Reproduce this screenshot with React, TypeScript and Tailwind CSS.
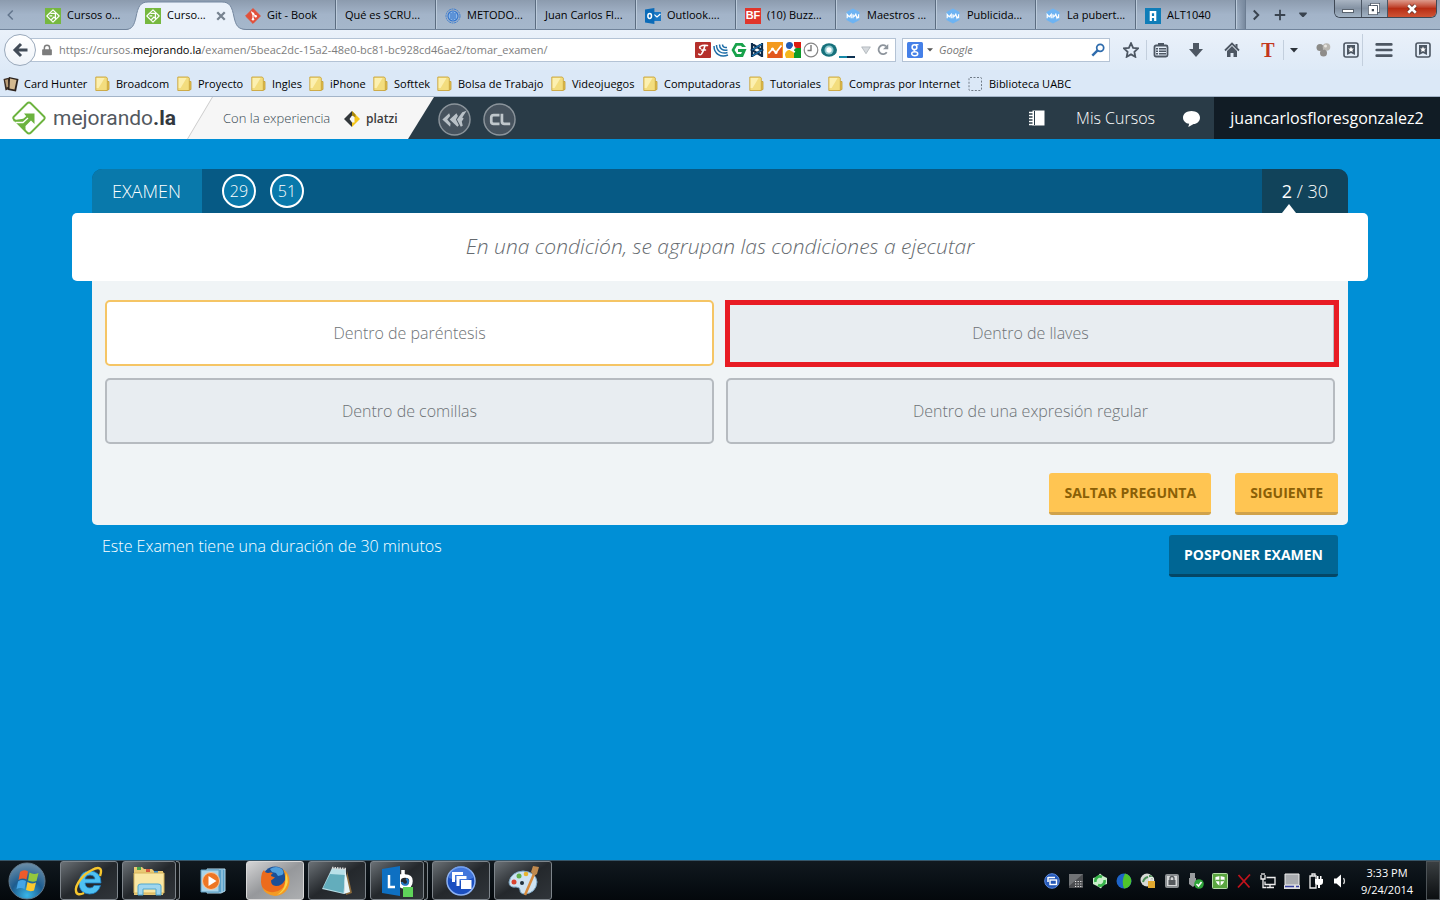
import React, { useState } from "react";

type IconProps = { className?: string };

function Svg({ children, className = "size-4", box = "0 0 16 16" }: { children: React.ReactNode; className?: string; box?: string }) {
  return (
    <svg viewBox={box} className={`${className} shrink-0`} aria-hidden="true" fill="none">
      {children}
    </svg>
  );
}

/* ---------- Favicons ---------- */

const MejorandoFavicon = () => (
  <Svg>
    <rect width="16" height="16" fill="#76b83f" />
    <path d="M8 1.8 14.2 8 8 14.2 1.800 8Z" stroke="#fff" strokeWidth="1.1" strokeLinejoin="round" />
    <path d="M5.4 5.400h5v5L8.900 9.100l-2.600 2.600M4.500 7.800h2.800" stroke="#fff" strokeWidth="1.3" />
  </Svg>
);

const GitFavicon = () => (
  <Svg>
    <path d="M8 .6 15.400 8 8 15.400.6 8Z" fill="#e2503a" stroke="#e2503a" strokeLinejoin="round" />
    <path d="M6.2 3.600 8 5.400v5.800M8 5.600l2.600 2.600" stroke="#fff" strokeWidth="1.1" />
    <circle cx="8" cy="5.600" r="1.200" fill="#fff" />
    <circle cx="8" cy="11.200" r="1.200" fill="#fff" />
    <circle cx="10.700" cy="8.300" r="1.200" fill="#fff" />
  </Svg>
);

const RingFavicon = () => (
  <Svg>
    <circle cx="8" cy="8" r="7" stroke="#3f7fd0" strokeWidth="1" strokeDasharray="2 .6" />
    <circle cx="8" cy="8" r="5" fill="#8db9ea" stroke="#3474cc" strokeWidth="1.200" />
    <path d="M6 5v6M8 4v8M10 5v6" stroke="#2d6cc4" strokeWidth="1" />
  </Svg>
);

const OutlookFavicon = () => (
  <Svg>
    <path d="M8 4h8v9H8Z" fill="#1b78c4" />
    <path d="M9 6.500 12 9l3.400-3" stroke="#fff" strokeWidth="1.300" />
    <path d="M0 1.600 9.400 0v16L0 14.400Z" fill="#0b6bb8" />
    <ellipse cx="4.700" cy="8" rx="1.800" ry="2.400" stroke="#fff" strokeWidth="1.500" />
  </Svg>
);

const BuzzFavicon = () => (
  <span className="flex size-4 shrink-0 items-center justify-center bg-[#e0352b] font-['Liberation_Sans'] text-[11px] leading-none font-bold text-white">BF</span>
);

const HexFavicon = () => (
  <Svg>
    <path d="M8 .5 14.500 4v8L8 15.500 1.500 12V4Z" fill="#6db3f2" />
    <path d="M2.200 10.200V6.400l2 2.400 2-2.400v3.800M8 6.200v4M13.600 6.200v4M8 8.200h1.600l1.200-2 1.200 4 1.600-2" stroke="#fff" strokeWidth="1.200" />
  </Svg>
);

const AltFavicon = () => (
  <Svg>
    <rect width="16" height="16" fill="#0f7db8" />
    <path d="M5.800 13V4.200h4.400V13M5.800 9h4.400" stroke="#fff" strokeWidth="2.200" />
  </Svg>
);

/* ---------- Tab strip ---------- */

const tabs: { label: string; icon?: () => React.ReactElement; active?: boolean }[] = [
  { label: "Cursos o...", icon: MejorandoFavicon },
  { label: "Curso...", icon: MejorandoFavicon, active: true },
  { label: "Git - Book", icon: GitFavicon },
  { label: "Qué es SCRU..." },
  { label: "METODO...", icon: RingFavicon },
  { label: "Juan Carlos Fl..." },
  { label: "Outlook....", icon: OutlookFavicon },
  { label: "(10) Buzz...", icon: BuzzFavicon },
  { label: "Maestros ...", icon: HexFavicon },
  { label: "Publicida...", icon: HexFavicon },
  { label: "La pubert...", icon: HexFavicon },
  { label: "ALT1040", icon: AltFavicon },
];

function TabStrip() {
  return (
    <div className="flex h-[30px] border-b border-[#71849b] bg-linear-to-b from-[#8c9bae] via-[#a3b4c9] to-[#a5b7cb]">
      <button aria-label="Pestañas anteriores" className="flex w-9 shrink-0 items-center pl-1.5 text-[#62758c]">
        <Svg className="size-3">
          <path d="M9 2 3 8l6 6" stroke="currentColor" strokeWidth="2" />
        </Svg>
      </button>
      <div role="tablist" className="flex min-w-0">
        {tabs.map((tab, i) => (
          <div key={i} className={`relative flex w-[100px] min-w-0 ${i > 1 ? "border-r border-[#5b6c80] shadow-[1px_0_0_#bccbdb]" : ""}`}>
            {tab.active && (
              <svg viewBox="0 0 120 30" preserveAspectRatio="none" className="absolute top-0 -left-2.5 h-[30px] w-[120px]" aria-hidden="true">
                <path d="M0 30C6 29 8 26 10 17 12 7 14 2 22 2H96C104 2 106 7 108 17 110 26 112 29 120 30Z" fill="#eaf1fa" />
                <path d="M0 29.500C6 29 8 26 10 17 12 7 14 2 22 2H96C104 2 106 7 108 17 110 26 112 29 120 29.500" fill="none" stroke="#7588a0" />
              </svg>
            )}
            <button
              role="tab"
              aria-selected={!!tab.active}
              className="relative flex min-w-0 flex-1 items-center gap-1.5 overflow-hidden pt-0.5 pl-[9px] text-[11px] whitespace-nowrap text-black"
            >
              {tab.icon && <tab.icon />}
              <span>{tab.label}</span>
            </button>
            {tab.active && (
              <button aria-label="Cerrar pestaña" className="relative mr-2.5 flex shrink-0 items-center pt-0.5 text-[#76828f]">
                <Svg className="size-2.5">
                  <path d="m2 2 12 12M14 2 2 14" stroke="currentColor" strokeWidth="3.600" />
                </Svg>
              </button>
            )}
          </div>
        ))}
      </div>
      <div className="w-2.5 border-r border-[#6c7d92] bg-linear-to-r from-transparent to-[#77889d]" />
      <div className="flex items-center gap-3 pl-1 text-[#39434f]">
        <button aria-label="Pestañas siguientes">
          <Svg className="size-3">
            <path d="m5 2 6 6-6 6" stroke="currentColor" strokeWidth="2.600" />
          </Svg>
        </button>
        <button aria-label="Nueva pestaña">
          <Svg className="size-3">
            <path d="M8 1v14M1 8h14" stroke="currentColor" strokeWidth="2.400" />
          </Svg>
        </button>
        <button aria-label="Lista de pestañas">
          <Svg className="size-2.5">
            <path d="M2 4h12v2l-5 5H7L2 6Z" fill="currentColor" />
          </Svg>
        </button>
      </div>
      <div className="mr-[3px] ml-auto flex h-[18px] w-[103px] shrink-0 overflow-hidden rounded-b-md border border-t-0 border-[#3f4855]">
        <button aria-label="Minimizar" className="flex flex-1 items-end justify-center border-r border-[#4b5664] bg-linear-to-b from-[#aab5c3] via-[#8492a3] to-[#a3b4c6] pb-1">
          <span className="h-1 w-3 border border-[#59636f] bg-white" />
        </button>
        <button aria-label="Restaurar" className="flex flex-1 items-center justify-center border-r border-[#4b5664] bg-linear-to-b from-[#aab5c3] via-[#8492a3] to-[#a3b4c6]">
          <Svg className="size-3">
            <path d="M5 5V2h9v9h-3" stroke="#4b5664" strokeWidth="4" />
            <path d="M5 5V2h9v9h-3" stroke="#fff" strokeWidth="2" />
            <rect x="2" y="5" width="9" height="9" stroke="#4b5664" strokeWidth="4" />
            <rect x="2" y="5" width="9" height="9" fill="#fff" stroke="#fff" strokeWidth="2" />
            <rect x="5" y="8" width="3" height="3" fill="#3c4652" />
          </Svg>
        </button>
        <button aria-label="Cerrar" className="flex w-12 items-center justify-center bg-linear-to-b from-[#dd9a8c] via-[#b82d14] to-[#cf5334]">
          <Svg className="size-3">
            <path d="m3 3 10 10M13 3 3 13" stroke="#5b2a22" strokeWidth="5.500" />
            <path d="m3 3 10 10M13 3 3 13" stroke="#fff" strokeWidth="3.600" />
          </Svg>
        </button>
      </div>
    </div>
  );
}

/* ---------- Navigation bar ---------- */

function AddonIcons() {
  return (
    <div className="flex shrink-0 items-center gap-0.5">
      <Svg>
        <rect width="16" height="16" rx="1" fill="#b5302b" />
        <path d="M5 4.500q3-2 7.500-1M10 3.500q-1.500 6-3.500 8.500-1.500 1.500-2.800 0M6.500 8h4M5 4.500q-1 1.500.5 2" stroke="#fff" strokeWidth="1.500" strokeLinecap="round" />
      </Svg>
      <Svg>
        <path d="M1 4c0 8 7 12 14 9M3.500 3c0 6 5 9.500 11 7.500M6.500 2.500c0 4 3 6.500 8 5.500M9.500 2.500c0 2 1.500 3.500 4.500 3" stroke="#1e6ea8" strokeWidth="1.500" />
      </Svg>
      <Svg>
        <path d="M4.500 1h7L15 5h-4L10 3.800H6L3.500 8 6 12h4l1-2H7V7h8.500L12 15H4.500L.5 8Z" fill="#18a24b" />
      </Svg>
      <Svg>
        <path d="M3 1v14M13 1v14M3 2l10 6L3 14M13 2 3 8l10 6" stroke="#0d2c4c" strokeWidth="2.200" />
        <path d="M3 8 13 2M3 14l10-6" stroke="#1d78b8" strokeWidth="1.200" />
      </Svg>
      <Svg>
        <rect width="16" height="16" fill="#f39a1e" />
        <path d="m1 12 4-5 4 3 6-7v13H1Z" fill="#e2571e" />
        <path d="m1.500 11.500 4-4.500 3.500 3.500 5.500-7" stroke="#fff" strokeWidth="1.800" />
        <circle cx="5.500" cy="7" r="1.500" fill="#fff" />
        <circle cx="9" cy="10.500" r="1.500" fill="#fff" />
      </Svg>
      <Svg>
        <rect width="16" height="16" fill="#fff" />
        <path d="M9 0h7v6h-4a3 3 0 0 1-3-3Z" fill="#dc1c12" />
        <path d="M9 8a3 3 0 0 1 3-2h4v10H9Z" fill="#0b9a28" />
        <circle cx="4.500" cy="3.500" r="3.500" fill="#2059b3" />
        <path d="M0 13c0-3 2-5 5-5s4 2 4 4v4H1Z" fill="#f4b71c" />
        <path d="M9 4 6 8l4 2" stroke="#fff" strokeWidth="1.500" />
      </Svg>
      <Svg>
        <circle cx="8" cy="8" r="6.800" fill="#fff" stroke="#858585" strokeWidth="1.200" />
        <path d="M8 3v5.500H4.500" stroke="#777" strokeWidth="1.400" />
      </Svg>
      <Svg>
        <ellipse cx="8" cy="8" rx="8" ry="6.800" fill="#16717c" />
        <circle cx="8" cy="8" r="4.500" fill="#8cc7cd" />
        <circle cx="8" cy="8" r="2.700" fill="#fff" />
      </Svg>
      <Svg>
        <path d="M0 14h8v2H0Z" fill="#1789a8" />
        <path d="M8 14h8v2H8Z" fill="#0c3152" />
      </Svg>
    </div>
  );
}

const BookmarkBox = () => (
  <Svg>
    <rect x="1" y="1" width="14" height="14" rx="2" stroke="#4d5763" strokeWidth="1.600" />
    <path d="M4 3h8v10l-4-2-4 2Z" fill="#4d5763" />
    <path d="m8 4.500.9 1.900 2 .2-1.500 1.400.4 2L8 9l-1.800 1 .4-2-1.500-1.400 2-.2Z" fill="#fff" />
  </Svg>
);

function NavBar() {
  return (
    <div className="flex h-10 items-center bg-linear-to-b from-[#eaf1fa] to-[#deeaf7] pr-[9px] pl-1">
      <button aria-label="Atrás" className="relative z-10 flex size-8 shrink-0 items-center justify-center rounded-full border border-[#9aa9bb] bg-linear-to-b from-white to-[#eef3f9] text-[#414b57]">
        <Svg>
          <path d="M9 2 3 8l6 6M3 8h12.500" stroke="currentColor" strokeWidth="3" />
        </Svg>
      </button>
      <div className="-ml-2.5 flex h-6 min-w-0 flex-1 items-center border border-[#b4c3d5] bg-white pr-1.5 pl-3.5">
        <Svg className="mr-1.5 size-3">
          <path d="M4.500 8V5a3.500 3.500 0 0 1 7 0v3" stroke="#7c7c7c" strokeWidth="2" />
          <rect x="1.500" y="7" width="13" height="8" rx="1" fill="#7c7c7c" />
        </Svg>
        <div role="textbox" aria-label="Dirección" tabIndex={0} className="min-w-0 flex-1 overflow-hidden text-[11px] whitespace-nowrap text-[#7d7d7d]">
          https://cursos.<span className="text-black">mejorando.la</span>/examen/5beac2dc-15a2-48e0-bc81-bc928cd46ae2/tomar_examen/
        </div>
        <AddonIcons />
        <button aria-label="Historial" className="ml-1.5 shrink-0">
          <Svg className="size-2.5">
            <path d="M1 3h14L8 14Z" fill="#d5d9dd" stroke="#9ca3aa" />
          </Svg>
        </button>
        <button aria-label="Recargar" className="ml-1.5 shrink-0">
          <Svg className="size-3">
            <path d="M13 11a6 6 0 1 1-1-8" stroke="#8d949c" strokeWidth="2.400" />
            <path d="M15 0v7H8Z" fill="#8d949c" />
          </Svg>
        </button>
      </div>
      <div className="ml-1.5 flex h-6 w-52 shrink-0 items-center border border-[#b4c3d5] bg-white pr-1 pl-1">
        <Svg>
          <rect width="16" height="16" rx="1.500" fill="#4580e8" />
          <circle cx="7.500" cy="5.200" r="2.400" stroke="#fff" strokeWidth="1.500" />
          <ellipse cx="7.700" cy="11.700" rx="3" ry="2" stroke="#fff" strokeWidth="1.500" />
          <path d="M8.500 2.600h3M8 7.600q-2 1 0 2" stroke="#fff" strokeWidth="1.300" />
        </Svg>
        <Svg className="ml-1 size-1.5">
          <path d="M0 3h16l-8 9Z" fill="#555" />
        </Svg>
        <input aria-label="Buscar" placeholder="Google" className="ml-1.5 min-w-0 flex-1 text-[11px] italic outline-none placeholder:text-[#767676]" />
        <button aria-label="Buscar en Google">
          <Svg className="size-3.5">
            <circle cx="10.500" cy="5.500" r="4" stroke="#2f6cad" strokeWidth="2" />
            <path d="m7.500 8.500-6 6" stroke="#2f6cad" strokeWidth="2.800" />
          </Svg>
        </button>
      </div>
      <div className="ml-[13px] flex shrink-0 items-center text-[#4d5763]">
        <button aria-label="Añadir marcador">
          <Svg>
            <path d="m8 1.200 2.100 4.600 4.900.6-3.600 3.400.9 5L8 12.400l-4.300 2.400.9-5L1 6.400l4.900-.6Z" stroke="currentColor" strokeWidth="1.800" />
          </Svg>
        </button>
        <span className="ml-[7px] h-5 w-px bg-[#c3cfdd]" />
        <button aria-label="Marcadores" className="ml-1.5">
          <Svg>
            <rect x="1.500" y="3.500" width="13" height="11" rx="1.500" stroke="currentColor" strokeWidth="1.800" />
            <path d="M5 1h6v3H5ZM3 6h2v1.400H3ZM6 6h7v1.400H6ZM3 8.500h2v1.400H3ZM6 8.500h7v1.400H6ZM3 11h2v1.400H3ZM6 11h7v1.400H6Z" fill="currentColor" />
          </Svg>
        </button>
        <button aria-label="Descargas" className="ml-[19px]">
          <Svg>
            <path d="M5 1h6v6h4l-7 8-7-8h4Z" fill="currentColor" />
          </Svg>
        </button>
        <button aria-label="Inicio" className="ml-5">
          <Svg>
            <path d="m1 8.500 7-7 7 7" stroke="currentColor" strokeWidth="1.800" />
            <path d="m3 9 5-5 5 5v6H9.500v-4h-3v4H3ZM11.500 2h2v4l-2-2Z" fill="currentColor" />
          </Svg>
        </button>
        <button aria-label="Texto" className="ml-5 w-4 font-['Liberation_Serif'] text-[20px] leading-none font-bold text-[#c3361c]">T</button>
        <span className="ml-[7px] h-5 w-px bg-[#c3cfdd]" />
        <button aria-label="Más opciones de texto" className="ml-1.5">
          <Svg className="size-2">
            <path d="M0 4h16l-8 9Z" fill="#2c333b" />
          </Svg>
        </button>
        <button aria-label="Complementos" className="ml-[17px]">
          <Svg>
            <circle cx="5" cy="5.500" r="3.500" fill="#8b8b88" />
            <circle cx="11.500" cy="5" r="3.800" fill="#b9b7b1" />
            <circle cx="8.500" cy="11" r="3.500" fill="#8f8d8a" />
            <circle cx="10.500" cy="4" r="1.500" fill="#e9e7e2" />
          </Svg>
        </button>
        <button aria-label="Biblioteca" className="ml-3">
          <BookmarkBox />
        </button>
        <span className="ml-[3px] h-8 w-px bg-[#c3cfdd]" />
        <button aria-label="Menú" className="ml-3">
          <Svg className="size-[18px]">
            <path d="M1.500 3h13M1.500 8h13M1.500 13h13" stroke="currentColor" strokeWidth="2.400" strokeLinecap="round" />
          </Svg>
        </button>
        <button aria-label="Panel de marcadores" className="ml-[22px]">
          <BookmarkBox />
        </button>
      </div>
    </div>
  );
}

/* ---------- Bookmarks ---------- */

const FolderIcon = () => (
  <Svg>
    <path d="M10.500 5.500h3.500v8l-3.500 1Z" fill="#e3c04c" stroke="#c19c32" strokeWidth=".8" />
    <path d="M.8 1h10.500l1 1.200v12.300H.8Z" fill="#f3dd7e" stroke="#c9a53d" strokeWidth=".9" />
    <path d="M1.600 2h8l-6 10h-2Z" fill="#fcf0b0" />
  </Svg>
);

const CardsIcon = () => (
  <Svg>
    <path d="m.5 3 6-1.500 1 11-5 2Z" fill="#3b2e26" />
    <path d="m6 1 9.500 2L13 15.500 5 14Z" fill="#2c221c" />
    <path d="m7 2.500 6.500 1.400-2 9.600-5-1Z" fill="#d3b990" />
    <path d="m2 4 3-.8.2 7.500-1.600.8Z" fill="#b99d78" />
  </Svg>
);

const DashedIcon = () => (
  <Svg>
    <rect x="1" y="1.500" width="12.500" height="13" rx="1" stroke="#6f7a86" strokeDasharray="2 1.500" />
  </Svg>
);

const bookmarks: { label: string; width: string; icon: () => React.ReactElement }[] = [
  { label: "Card Hunter", width: "w-[92px]", icon: CardsIcon },
  { label: "Broadcom", width: "w-[82px]", icon: FolderIcon },
  { label: "Proyecto", width: "w-[74px]", icon: FolderIcon },
  { label: "Ingles", width: "w-[58px]", icon: FolderIcon },
  { label: "iPhone", width: "w-[64px]", icon: FolderIcon },
  { label: "Softtek", width: "w-[64px]", icon: FolderIcon },
  { label: "Bolsa de Trabajo", width: "w-[114px]", icon: FolderIcon },
  { label: "Videojuegos", width: "w-[92px]", icon: FolderIcon },
  { label: "Computadoras", width: "w-[106px]", icon: FolderIcon },
  { label: "Tutoriales", width: "w-[79px]", icon: FolderIcon },
  { label: "Compras por Internet", width: "w-[140px]", icon: FolderIcon },
  { label: "Biblioteca UABC", width: "w-[120px]", icon: DashedIcon },
];

function Bookmarks() {
  return (
    <nav aria-label="Marcadores" className="flex h-[27px] items-center overflow-hidden border-b border-[#a3b4c8] bg-[#dbe8f7] pt-0.5 pl-[3px]">
      {bookmarks.map((b) => (
        <a key={b.label} href="#" className={`flex shrink-0 items-center gap-[5px] text-[11px] whitespace-nowrap text-black ${b.width}`}>
          <b.icon />
          {b.label}
        </a>
      ))}
    </nav>
  );
}

/* ---------- Site header ---------- */

function SiteHeader() {
  return (
    <header className="flex h-[42px] items-stretch bg-[#293b47] text-white">
      <div className="flex w-[434px] shrink-0 bg-[#f6f6f6] [clip-path:polygon(0_0,100%_0,408px_100%,0_100%)]">
        <div className="w-[213px] bg-[#cccccc] [clip-path:polygon(0_0,100%_0,188px_100%,0_100%)]">
          <a href="#" className="flex h-full items-center bg-white pl-3 [clip-path:polygon(0_0,212px_0,187px_100%,0_100%)]">
            <Svg className="size-[34px]" box="0 0 34 34">
              <path d="M15 2.500 2 15.500q-1.500 1.500 0 3L15 31.500q2 2 4 0L32 18.500q1.500-1.500 0-3L19 2.500q-2-2-4 0Z" stroke="#6cb33f" strokeWidth="1.900" />
              <path d="M12 12.500h10.500V23l-3.500-3.500-5.500 5.500v6L4 21v-2l8.500-1.500 1 .5h-2l3-2.500Z" fill="#6cb33f" />
              <path d="M1.500 19.500h9l5-4.500" stroke="#6cb33f" strokeWidth="1.500" />
              <path d="M3.500 21.500h7.500l5-4.500" stroke="#fff" strokeWidth="1.300" />
            </Svg>
            <span className="ml-[7px] font-['Roboto',sans-serif] text-[21px] leading-none text-[#53595f]">
              mejorando<b className="text-[#32383e]">.la</b>
            </span>
          </a>
        </div>
        <div className="flex items-center pt-0.5 pl-2.5">
          <span className="w-[121px] text-[13px] font-light whitespace-nowrap text-[#33454f]">Con la experiencia</span>
          <a href="#" className="flex items-center gap-1.5 font-['Open_Sans',sans-serif] text-[12px] font-semibold text-[#3b3b3b]">
            <Svg>
              <path d="M8 0 0 8l8 8v-4.500L5.500 8 8 4.500Z" fill="#33383c" />
              <path d="m8 0 8 8-8 8v-4.500h2.500V4.500H8Z" fill="#f5c518" />
              <path d="m8 0 3.500 3.500v3L8 4.500Z" fill="#a8860f" />
            </Svg>
            platzi
          </a>
        </div>
      </div>
      <div className="flex items-center gap-3 pt-0.5 pl-1">
        <a href="#" aria-label="Cursos de código">
          <Svg className="size-[33px]" box="0 0 34 34">
            <circle cx="17" cy="17" r="16" fill="#47535e" stroke="#8b949b" strokeWidth="1.500" />
            <path d="m11.500 10.500-7 6.500 8 7.500.5-3.500-3.500-4 3-3.500ZM19 10.500l-7 6.500 8 7.500 1.500-1.500-3-6 2-3.500ZM29.500 8l-4.500 1.500-5.500 7.500 4 7.500 2-1-1-4.500 2-3-1.500-1Z" fill="#b9c1c7" />
          </Svg>
        </a>
        <a href="#" aria-label="Cursos en línea">
          <Svg className="size-[33px]" box="0 0 34 34">
            <circle cx="17" cy="17" r="16" fill="#47535e" stroke="#8b949b" strokeWidth="1.500" />
            <path d="M17 12.500h-6q-2.500 0-2.500 2.500v4q0 2.500 2.500 2.500h6M19.500 11v8q0 2.500 2.500 2.500h6" stroke="#c0c7cc" strokeWidth="2.800" />
          </Svg>
        </a>
      </div>
      <div className="ml-auto flex items-center text-[16px] font-light">
        <a href="#" aria-label="Cuaderno">
          <Svg>
            <path d="M3.500.5H15.500v15H3.500Z" fill="#fff" />
            <path d="M0 2.500h4M0 5.500h4M0 8.500h4M0 11.500h4M0 14.500h4" stroke="#fff" strokeWidth="1.400" />
            <path d="M5.500 1v14" stroke="#293b47" strokeWidth="1" />
          </Svg>
        </a>
        <a href="#" className="ml-[31px]">Mis Cursos</a>
        <a href="#" aria-label="Mensajes" className="ml-7">
          <Svg className="size-[17px]">
            <path d="M8 1c4.500 0 8 2.600 8 6.200 0 3.200-3 5.800-6 6L5 16l.8-3C2.500 12.500 0 10 0 7.200 0 3.600 3.500 1 8 1Z" fill="#fff" />
          </Svg>
        </a>
        <a href="#" className="ml-3.5 flex h-full min-w-[226px] items-center justify-center bg-[#111c25] px-[15px] font-normal">juancarlosfloresgonzalez2</a>
      </div>
    </header>
  );
}

/* ---------- Exam ---------- */

const answers = ["Dentro de paréntesis", "Dentro de llaves", "Dentro de comillas", "Dentro de una expresión regular"];
const markedAnswer = 1;

function Exam() {
  const [chosen, setChosen] = useState(0);
  return (
    <main className="flex-1 bg-[#008fd6] px-[72px] pt-[30px] pb-8">
      <div className="mx-5 flex h-11 items-stretch overflow-hidden rounded-t-[10px] bg-[#065a85] text-[18px] font-light text-white">
        <h1 className="flex min-w-[110px] items-center bg-[#0979ab] px-5">EXAMEN</h1>
        <div className="flex items-center gap-3.5 pl-5 text-[16px]">
          <span className="flex size-[34px] items-center justify-center rounded-full border-2 border-white bg-[#0979ab]">29</span>
          <span className="flex size-[34px] items-center justify-center rounded-full border-2 border-white bg-[#0979ab]">51</span>
        </div>
        <p className="relative ml-auto flex items-center bg-[#11435a] px-5 whitespace-pre">
          <span className="font-normal">2</span> / 30
          <svg viewBox="0 0 14 9" className="absolute bottom-0 left-5 h-[9px] w-3.5" aria-hidden="true">
            <path d="M7 0 14 9H0Z" fill="#fff" />
          </svg>
        </p>
      </div>
      <h2 className="flex min-h-[68px] items-center justify-center rounded-[5px] bg-white text-[21px] font-light text-[#666b70] italic">
        En una condición, se agrupan las condiciones a ejecutar
      </h2>
      <section className="mx-5 rounded-b-[5px] bg-[#f0f4f6] px-[13px] pt-[19px] pb-2.5">
        <div className="grid grid-cols-2 gap-3">
          {answers.map((a, i) => (
            <div key={a} className="relative flex">
              <button
                aria-pressed={chosen === i}
                onClick={() => setChosen(i)}
                className={`h-[66px] flex-1 rounded-[5px] border-2 text-[16px] font-light text-[#6d7276] ${
                  chosen === i ? "border-[#f5c565] bg-white" : "border-[#b6bbc0] bg-[#e8edf1]"
                }`}
              >
                {a}
              </button>
              {i === markedAnswer && <span className="pointer-events-none absolute top-0 -right-1 -bottom-px -left-px border-5 border-[#e81c24]" />}
            </div>
          ))}
        </div>
        <div className="-mr-[3px] mt-[29px] flex justify-end gap-6">
          <button className="h-[42px] rounded-[3px] border-b-3 border-[#d0a24b] bg-[#ffc552] px-[15px] text-[14px] font-bold text-[#8a5f06]">SALTAR PREGUNTA</button>
          <button className="h-[42px] rounded-[3px] border-b-3 border-[#d0a24b] bg-[#ffc552] px-[15px] text-[14px] font-bold text-[#8a5f06]">SIGUIENTE</button>
        </div>
      </section>
      <div className="mx-5 flex items-start justify-between px-2.5 pt-2.5">
        <p className="text-[16px] leading-[22px] font-light text-white">Este Examen tiene una duración de 30 minutos</p>
        <button className="h-[42px] rounded-[3px] border-b-3 border-[#044766] bg-[#006694] px-[15px] text-[14px] font-bold text-white">POSPONER EXAMEN</button>
      </div>
    </main>
  );
}

/* ---------- Taskbar ---------- */

const StartOrb = () => (
  <Svg className="size-[38px]" box="0 0 38 38">
    <defs>
      <radialGradient id="orb" cx=".5" cy=".9" r=".9">
        <stop offset="0" stopColor="#39b6e8" />
        <stop offset=".5" stopColor="#1d5c8f" />
        <stop offset="1" stopColor="#6d8fa8" />
      </radialGradient>
    </defs>
    <circle cx="19" cy="19" r="18" fill="url(#orb)" stroke="#61798c" />
    <path d="M12 10q4-3 8-.5l-1.500 8q-4-2-8 .5Z" fill="#ee5a2a" />
    <path d="M21.500 10.500q4 2.500 9 .5l-2 8q-4 1.500-8.500-.5Z" fill="#94c83d" />
    <path d="M10 19.500q4-2.500 8-.5l-1.500 8q-4-2-8 0Z" fill="#45a5e6" />
    <path d="M19.500 20q4 2.500 8.500.5l-2 8q-4 1.500-8-.5Z" fill="#fcc92f" />
  </Svg>
);

const IeIcon = () => (
  <Svg className="size-8" box="0 0 32 32">
    <path d="M28 18H12q.5 5 5 5 3 0 4-2.500h6.500Q25 29 16.500 29 6 28.500 6 17.500 7 6 17 6q11 .5 11 12ZM12 14h10q-.5-4-5-4t-5 4Z" fill="#4fc1f2" stroke="#1d7fc4" strokeWidth=".8" />
    <path d="M27 11c3-8-1-10-8-6C10 9 2 20 3 26c.5 4 4 4 8 2" stroke="#f6c62e" strokeWidth="2.400" />
  </Svg>
);

const ExplorerIcon = () => (
  <Svg className="size-[34px]" box="0 0 34 34">
    <path d="M2 6V3h8l2 2h8l2 2h9v24H2Z" fill="#e9c974" />
    <path d="M5 3h4v3H5Z" fill="#48a64b" />
    <path d="M14 5h4v3h-4Z" fill="#d5573c" />
    <path d="M22 7h4v3h-4Z" fill="#3c8ec9" />
    <path d="M2 9h30v20H2Z" fill="#f9e7a4" stroke="#d6b35b" />
    <path d="M6 31V22q0-2 3-2h17q3 0 3 2v9h-5v-6H11v6Z" fill="#9fd6ef" stroke="#4fa6cf" />
  </Svg>
);

const MediaIcon = () => (
  <Svg className="size-7" box="0 0 28 28">
    <path d="M8 2h18v22l-4 2H8Z" fill="#5aa0c8" stroke="#b9dcee" />
    <path d="M23 3v22" stroke="#b9dcee" />
    <path d="M2 3h18v22H2Z" fill="#a9d4e9" stroke="#5e9dbf" />
    <circle cx="12" cy="14" r="8.500" fill="#ee7624" stroke="#f8c9a0" />
    <path d="m9.500 9 8 5-8 5Z" fill="#fff" />
  </Svg>
);

const FirefoxIcon = () => (
  <Svg className="size-8" box="0 0 32 32">
    <circle cx="16" cy="14" r="12.500" fill="#1b4f96" />
    <path d="M11 4q6-4 12 0 3 4 0 6l-4 1-2-3-4-1Z" fill="#4f9fdc" />
    <path d="M3 8q1-2 2-3 1 3 4 3 3-1 5 0-2 1-2 3l4 1.500-4 3q0 5 5 5.500 6 0 9-6 2 5-1 9-4 5-10 5Q3 28 2 17q0-6 1-9Z" fill="#ec6b1c" />
    <path d="M24 4q7 5 6.500 13Q29 30 16 31 6 30 3 22q5 6 12 5 9-1 11-9 1-7-2-14Z" fill="#f39a24" />
    <path d="M27 8q4 9-1 16-3 4-8 6 7-5 8-11Z" fill="#fbd545" />
  </Svg>
);

const NotepadIcon = () => (
  <Svg className="size-8" box="0 0 32 32">
    <path d="m26 6 5 22-6 2Z" fill="#8c6a3a" />
    <path d="m11 3 14 1-2 25-22-5Z" fill="#b9e0e8" />
    <path d="m9 9 15 1-1.500 18L2 23Z" fill="#3f97aa" opacity=".7" />
    <path d="m24 4 5 23-6 2Z" fill="#e8f5f7" />
    <path d="m11 3 14 1" stroke="#d8d8d8" strokeWidth="2.500" strokeDasharray="1.500 1" />
  </Svg>
);

const LyncIcon = () => (
  <Svg className="size-8" box="0 0 32 32">
    <path d="M18 16q0-5 6-5t6 5q0 6-6 6t-6-6ZM22 5v6h-4" stroke="#fff" strokeWidth="3.500" />
    <path d="M21 17a3 3 0 1 0 4-3" stroke="#2579c4" strokeWidth="2" />
    <path d="M1 4 19 1v30L1 28Z" fill="#0e70c2" />
    <path d="M8 10v12h6" stroke="#fff" strokeWidth="2.500" />
    <path d="M22 22h10v10H22Z" fill="#5fd35a" />
  </Svg>
);

const WindowsIcon = () => (
  <Svg className="size-[30px]" box="0 0 30 30">
    <circle cx="15" cy="15" r="14" fill="#1b4fc0" stroke="#8db2f3" strokeWidth="1.500" />
    <path d="M3 12a12 12 0 0 1 24 0q-12 6-24 0Z" fill="#5f93ec" opacity=".6" />
    <path d="M6 6h11v3H9v7H6ZM10.500 10h10v3h-7v7h-3Z" fill="#fff" />
    <path d="M15 14h10.500v9H15Z" fill="#fff" />
  </Svg>
);

const PaintIcon = () => (
  <Svg className="size-8" box="0 0 32 32">
    <path d="M2 17q2-10 14-11 13 1 14 11-1 11-12 12-5 0-5-4 0-3-4-3-7 1-7-5Z" fill="#cfe3f2" stroke="#7da7c5" />
    <circle cx="7" cy="17" r="2.500" fill="#d9432f" />
    <circle cx="12" cy="11" r="2.500" fill="#5fb04a" />
    <circle cx="19" cy="9" r="2.300" fill="#e8b52e" />
    <circle cx="15" cy="18" r="2" fill="#20303c" />
    <path d="m18 30 9-21" stroke="#d78a3c" strokeWidth="2.500" />
    <path d="m24 7 2-6 6 1-2 7-3 2Z" fill="#c08a4e" />
  </Svg>
);

const apps: { name: string; icon: (p: IconProps) => React.ReactElement; kind?: "active" | "plain" | "stack" }[] = [
  { name: "Internet Explorer", icon: IeIcon },
  { name: "Explorador de Windows", icon: ExplorerIcon, kind: "stack" },
  { name: "Reproductor de Windows Media", icon: MediaIcon, kind: "plain" },
  { name: "Firefox", icon: FirefoxIcon, kind: "active" },
  { name: "Bloc de notas", icon: NotepadIcon },
  { name: "Lync", icon: LyncIcon, kind: "stack" },
  { name: "Escritorios", icon: WindowsIcon },
  { name: "Paint", icon: PaintIcon },
];

function appStyle(kind?: string) {
  if (kind === "active") return "border border-[#d8d8d8] bg-linear-to-br from-[#d5d5d6] via-[#96989b] to-[#adafb1]";
  if (kind === "plain") return "border border-transparent";
  return "border border-[#7e858b] bg-linear-to-br from-[#6b7176] via-[#24282c] to-[#30353a]";
}

function Tray() {
  return (
    <div className="flex items-center gap-2">
      <Svg>
        <circle cx="8" cy="8" r="7.300" fill="#2458b8" stroke="#5d8be0" />
        <path d="M4 4.500h7M4 4v5" stroke="#fff" strokeWidth="1.500" />
        <rect x="6" y="7" width="6.500" height="4.500" fill="#2458b8" stroke="#fff" strokeWidth="1.400" />
      </Svg>
      <Svg>
        <path d="M1 1h14v14H1Z" fill="#4b4d50" />
        <path d="M1 1h14L1 13Z" fill="#707376" />
        <path d="M7 8.500h8M7 11h8M7 13.500h8" stroke="#eee" strokeDasharray="1.200 1.400" />
      </Svg>
      <Svg>
        <path d="M8 .5 11 3l4 2v6l-4 1-2 3.500-4-2.500-4-2V5l4-1Z" fill="#c9efca" />
        <path d="M3.500 9a4.500 4.500 0 0 1 6.500-5M12.500 7A4.500 4.500 0 0 1 6 12" stroke="#37b34a" strokeWidth="2.600" />
      </Svg>
      <Svg>
        <circle cx="8" cy="8" r="7.500" fill="#1d64c8" />
        <path d="M9 .6a7.500 7.500 0 0 1-1 14.900Q5 8 9 .6Z" fill="#4fc42c" />
      </Svg>
      <Svg>
        <circle cx="7" cy="7" r="6.500" fill="#d7dad6" />
        <path d="M3 9q1-4 5-5M9 3q3 0 4 3" stroke="#4b8f55" strokeWidth="2" />
        <path d="M9.500 8V6.500a2 2 0 0 1 4 0V8" stroke="#eee" strokeWidth="1.300" />
        <rect x="8" y="8" width="7" height="7" fill="#e2a92f" />
      </Svg>
      <Svg>
        <rect x="1" y="1" width="14" height="14" rx="2" fill="#8b8f92" />
        <rect x="3" y="3" width="10" height="10" fill="#d5d7d8" />
        <rect x="4.500" y="7" width="7" height="5" fill="#55595d" />
        <path d="M6 7V5.500a2 2 0 0 1 4 0V7" stroke="#55595d" strokeWidth="1.300" />
      </Svg>
      <Svg>
        <path d="M2 0h5v5H2ZM1 5h7v6l-3 3-4-3Z" fill="#9a9da0" />
        <circle cx="11" cy="11" r="4.800" fill="#2fa33a" />
        <path d="m8.500 11 2 2 3-4" stroke="#fff" strokeWidth="1.600" />
      </Svg>
      <Svg>
        <rect x=".5" y=".5" width="15" height="15" rx="1" fill="#5aa53f" stroke="#b4dba4" />
        <path d="M3.500 4 8 3l4.500 1q1 6-4.500 9-5.500-3-4.500-9Z" fill="#fff" />
        <path d="M8 3v10M3.500 7.500h9" stroke="#5aa53f" strokeWidth="1.300" />
      </Svg>
      <Svg>
        <path d="m2.500 2 11 12.500M14 1.500 2 14.500" stroke="#c1131c" strokeWidth="1.800" />
      </Svg>
      <Svg>
        <path d="M6.500 4.500H15v7H5v-3M10 12v2M6.500 14.500H14M1 2v4h4V2M2 0v2M4 0v2M3 6v8.500h3" stroke="#eee" strokeWidth="1.300" />
      </Svg>
      <Svg>
        <path d="M1 1h14v11H1Z" fill="#a9acb0" stroke="#eee" />
        <path d="M0 12h16v4H0Z" fill="#dcdde0" />
        <path d="M1 13.500h9M12 13.500h3" stroke="#3640a0" strokeWidth="1.500" />
      </Svg>
      <Svg>
        <path d="M2 3h6v12H2ZM4 1h3v2H4Z" stroke="#eee" strokeWidth="1.300" />
        <path d="M7 6h8v3q0 3-3 3v3h-2v-3q-3 0-3-3ZM9 3h1.500v3H9ZM12 3h1.500v3H12Z" fill="#fff" />
      </Svg>
      <Svg>
        <path d="M2 5.500h2.500L9 1.500v13l-4.500-4H2Z" fill="#fff" />
        <path d="M11.500 5q2 3 0 6" stroke="#d5d5d5" strokeWidth="1.300" />
      </Svg>
    </div>
  );
}

function Taskbar() {
  return (
    <footer className="flex h-10 shrink-0 items-stretch border-t border-[#36566a] bg-linear-to-b from-[#11191f] to-[#04080c] text-white">
      <button aria-label="Inicio de Windows" className="mr-3.5 ml-2 flex items-center">
        <StartOrb />
      </button>
      <div className="flex gap-1">
        {apps.map((app) => (
          <div key={app.name} className="flex w-[58px]">
            <button aria-label={app.name} className={`flex flex-1 items-center justify-center rounded-[3px] ${appStyle(app.kind)}`}>
              <app.icon />
            </button>
            {app.kind === "stack" && <span className="w-1 rounded-r-[3px] border border-l-0 border-[#7e858b] bg-[#15191c]" />}
          </div>
        ))}
      </div>
      <div className="ml-auto flex items-center">
        <Tray />
        <div className="w-[78px] text-center text-[11px] leading-[17px]">
          <div>3:33 PM</div>
          <div>9/24/2014</div>
        </div>
        <button aria-label="Mostrar escritorio" className="h-full w-3.5 border border-[#4d5357] bg-linear-to-b from-[#3a3f42] to-[#0c0f11]" />
      </div>
    </footer>
  );
}

export default function App() {
  return (
    <div className="flex min-h-screen flex-col font-['Open_Sans','Noto_Sans',sans-serif]">
      <TabStrip />
      <NavBar />
      <Bookmarks />
      <SiteHeader />
      <Exam />
      <Taskbar />
    </div>
  );
}
